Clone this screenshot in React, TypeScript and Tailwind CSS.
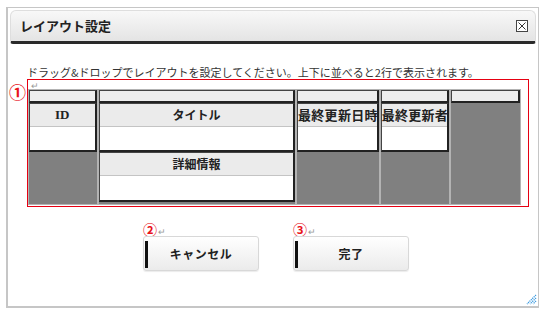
import React from 'react'

const jp = "font-['Noto_Sans_CJK_JP','Noto_Sans',sans-serif]"

function HeadCell() {
  return <div className="h-[13px] shrink-0 bg-[#eeeeee] border border-[#444] border-r-2 border-b-2 border-r-[#222] border-b-[#222]" />
}

function Field({ label, kind, h = 49 }: { label: string; kind?: 'serif' | 'wide'; h?: number }) {
  let font = 'text-[12px]'
  if (kind === 'serif') font = "font-['Liberation_Serif','Noto_Sans_CJK_JP',serif] text-[13px] text-[#1a1a3a]"
  if (kind === 'wide') font = 'text-[13px] tracking-[0.3px]'
  return (
    <div
      className="shrink-0 flex flex-col bg-white border border-[#444] border-r-2 border-b-2 border-r-[#222] border-b-[#222]"
      style={{ height: h }}
    >
      <div
        className={`h-[23px] shrink-0 flex items-center justify-center bg-[#ebebeb] border-b border-[#c4c4c4] whitespace-nowrap overflow-visible font-bold text-[#222] ${font}`}
      >
        {label}
      </div>
      <div className="flex-1" />
    </div>
  )
}

function Circled({ n, size }: { n: string; size: string }) {
  return <span className={`${size} leading-none text-[#e8141c] font-bold`}>{n}</span>
}

function Ret() {
  return <span className="text-[9px] leading-none text-[#999]">↵</span>
}

function Btn({ label }: { label: string }) {
  return (
    <button className="relative w-[116px] h-[35px] flex items-center justify-center rounded-[3px] border border-[#d8d8d8] bg-gradient-to-b from-white to-[#ebebeb] shadow-[0_1px_1px_rgba(0,0,0,0.08)]">
      <span className="absolute left-[1px] top-[4px] w-[3px] h-[27px] bg-[#111]" />
      <span className="text-[12px] font-bold text-[#222] tracking-[0.5px]">{label}</span>
    </button>
  )
}

export default function App() {
  return (
    <div className={`w-[543px] h-[313px] bg-white pt-[7px] pl-[6px] ${jp}`}>
      <div className="relative w-[533px] h-[301px] border border-[#c6c6c6] border-l-2 border-b-2 bg-white flex flex-col p-[2px]">
        {/* header */}
        <div className="h-[34px] shrink-0 flex items-center justify-between rounded-t-[6px] rounded-b-[3px] bg-gradient-to-b from-[#f8f8f8] to-[#e4e4e4] border border-[#dedede] border-b-[3px] border-b-[#2a2a2a] pl-[9px] pr-[7px]">
          <span className="text-[13px] font-bold text-[#222]">レイアウト設定</span>
          <span className="w-[12px] h-[12px] border border-[#444] bg-white flex items-center justify-center">
            <svg width="8" height="8" viewBox="0 0 8 8">
              <path d="M0.5 0.5 L7.5 7.5 M7.5 0.5 L0.5 7.5" stroke="#333" strokeWidth="1" />
            </svg>
          </span>
        </div>

        <div className="pl-[17px] pt-[20px] text-[11px] leading-[16px] text-[#333] whitespace-nowrap">
          ドラッグ&ドロップでレイアウトを設定してください。上下に並べると2行で表示されます。
        </div>

        {/* layout area */}
        <div className="flex items-start mt-[-1px]">
          <div className="w-[18px] pt-[1px] -ml-[1px]">
            <Circled n="①" size="text-[17px]" />
          </div>
          <div className="w-[502px] h-[128px] border border-[#e60012] pt-[1px]">
            <div className="h-[8px] pl-[3px] flex items-start">
              <Ret />
            </div>
            <div className="w-[493px] h-[116px] bg-[#b3b3b3] p-[1px] flex gap-[2px]">
              <div className="w-[68px] flex flex-col bg-[#808080]">
                <HeadCell />
                <Field label="ID" kind="serif" />
              </div>
              <div className="w-[198px] flex flex-col bg-[#808080]">
                <HeadCell />
                <Field label="タイトル" />
                <Field label="詳細情報" h={50} />
              </div>
              <div className="w-[82px] flex flex-col bg-[#808080]">
                <HeadCell />
                <Field label="最終更新日時" kind="wide" />
              </div>
              <div className="w-[68px] flex flex-col bg-[#808080]">
                <HeadCell />
                <Field label="最終更新者" kind="wide" />
              </div>
              <div className="w-[69px] flex flex-col bg-[#808080]">
                <HeadCell />
              </div>
            </div>
          </div>
        </div>

        {/* buttons */}
        <div className="flex pl-[133px] pt-[16px] gap-[34px]">
          <div className="flex flex-col">
            <div className="flex items-end h-[13px] gap-[1px]">
              <Circled n="②" size="text-[14px]" />
              <Ret />
            </div>
            <Btn label="キャンセル" />
          </div>
          <div className="flex flex-col">
            <div className="flex items-end h-[13px] gap-[1px]">
              <Circled n="③" size="text-[14px]" />
              <Ret />
            </div>
            <Btn label="完了" />
          </div>
        </div>

        {/* resize grip */}
        <svg className="absolute right-[1px] bottom-[1px]" width="12" height="12" viewBox="0 0 12 12">
          <path d="M11 2 L2 11 M11 5 L5 11 M11 8 L8 11" stroke="#3d9be0" strokeWidth="1.3" strokeDasharray="1.2 0.8" />
        </svg>
      </div>
    </div>
  )
}
